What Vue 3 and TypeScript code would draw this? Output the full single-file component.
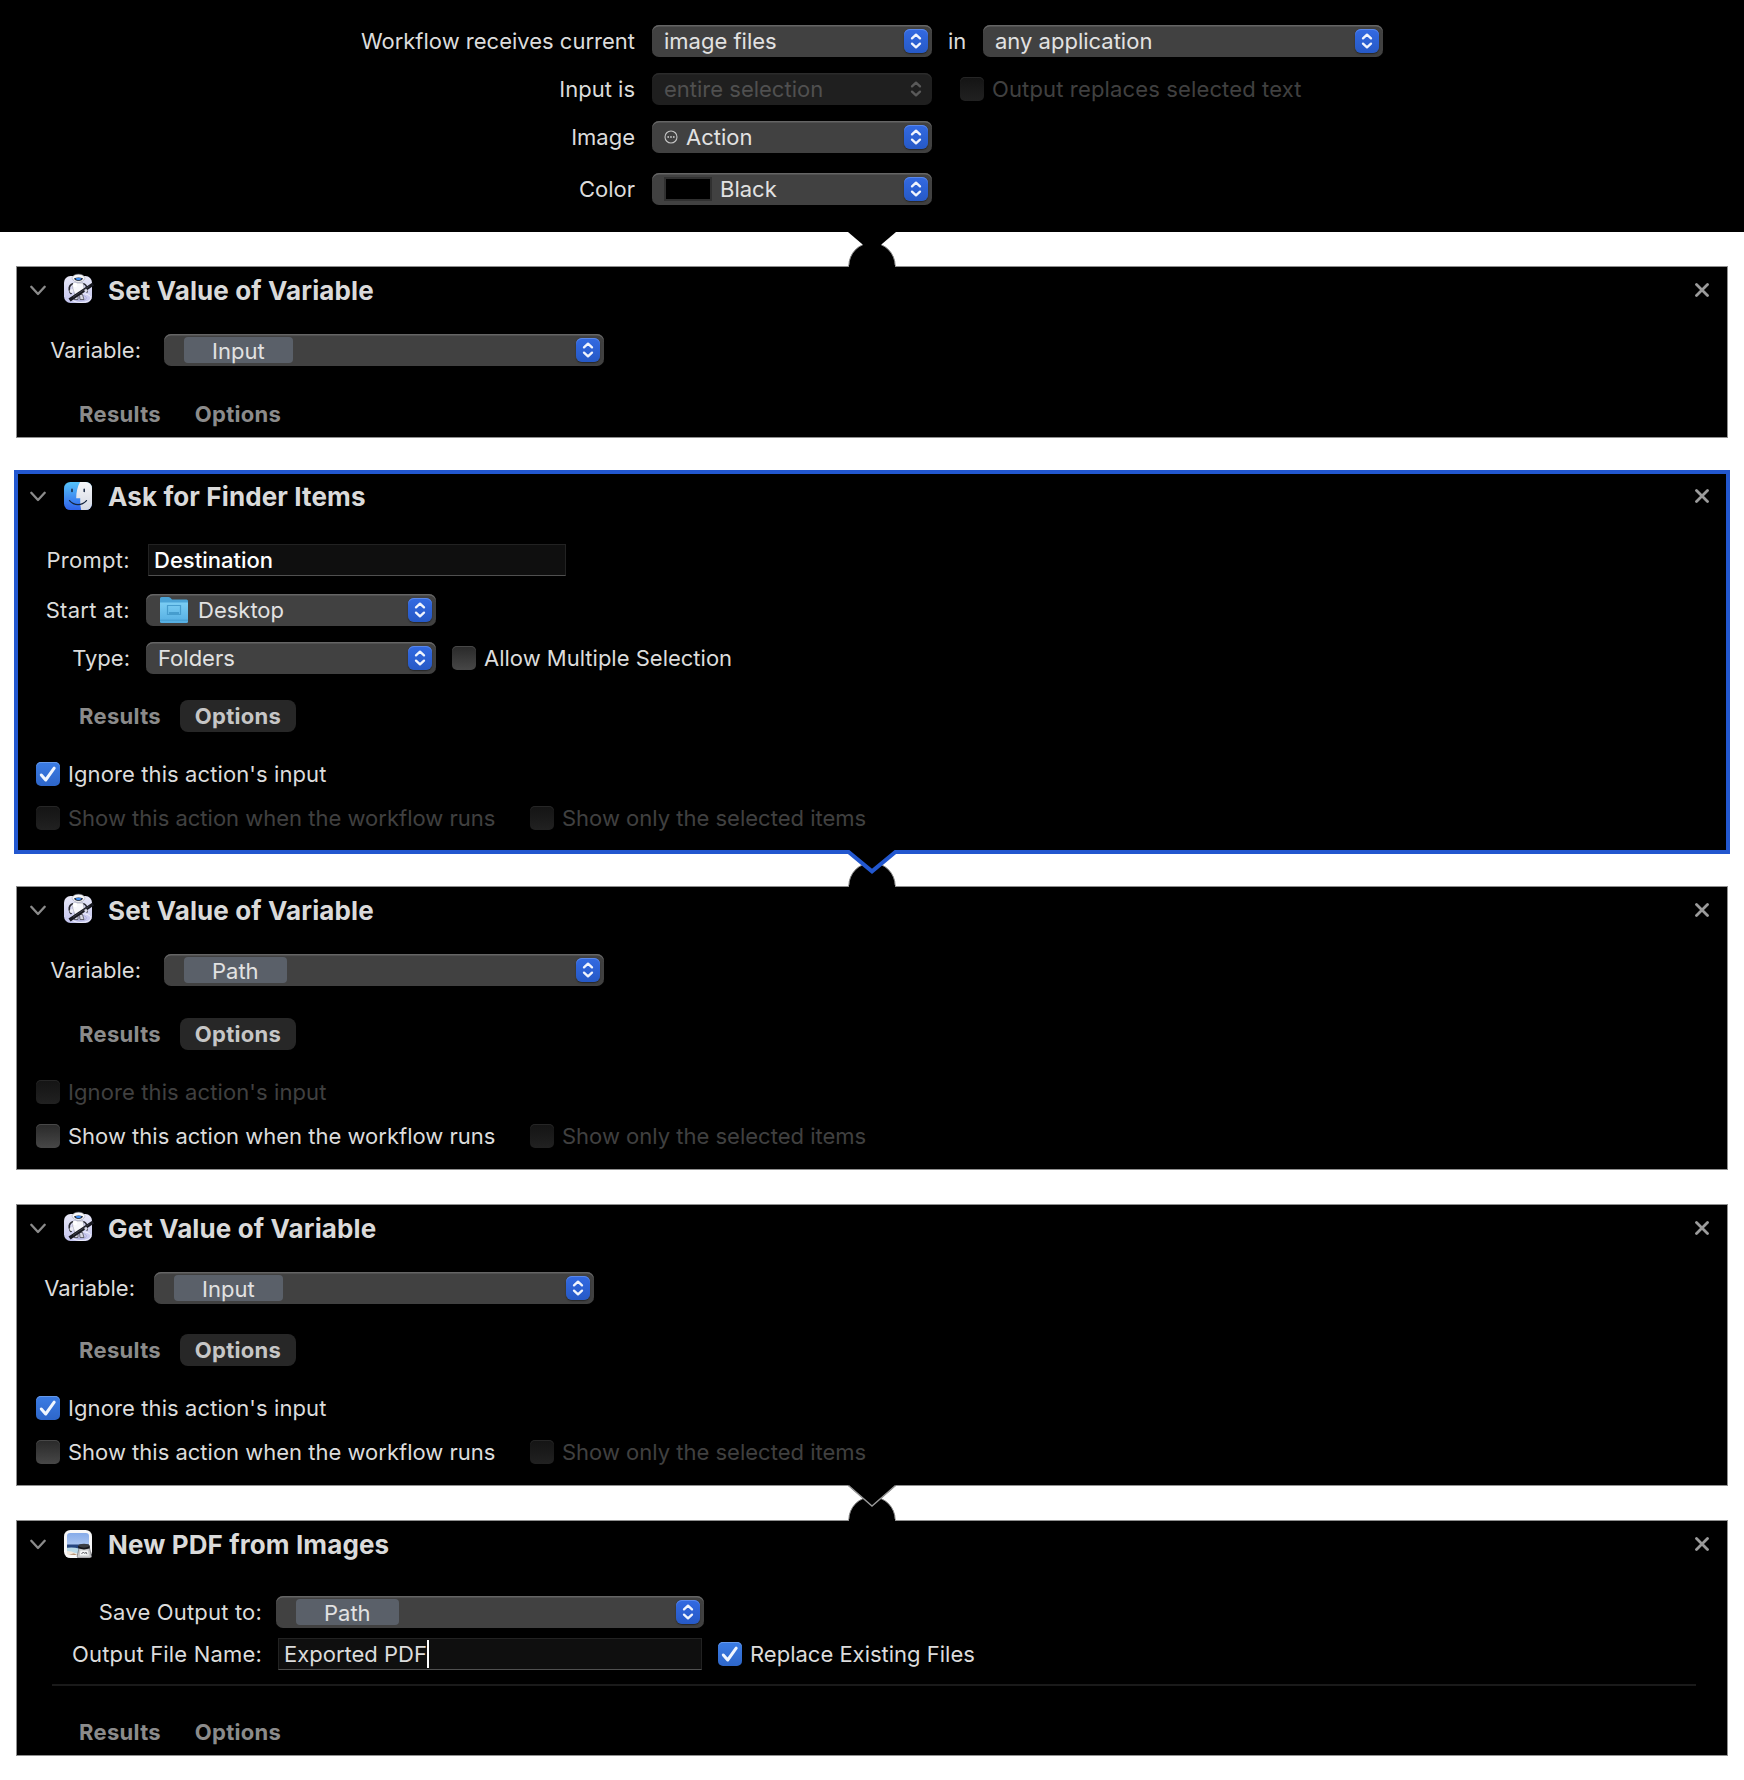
<script setup lang="ts">
type Check = { label: string; checked?: boolean; disabled?: boolean }
type Row = {
  label: string
  kind: 'variable' | 'select' | 'field'
  value: string
  folder?: boolean
  strong?: boolean
  caret?: boolean
  check?: Check
}
type Action = {
  title: string
  icon: 'automator' | 'finder' | 'preview'
  layout: string
  selected?: boolean
  rows: Row[]
  rule?: boolean
  optionsOpen?: boolean
  ignore?: Check
  show?: Check
  link: 'none' | 'plain' | 'selected'
}

const ignore = 'Ignore this action\'s input'
const show = 'Show this action when the workflow runs'
const only: Check = { label: 'Show only the selected items', disabled: true }

const actions: Action[] = [
  {
    title: 'Set Value of Variable', icon: 'automator', layout: 'set', link: 'none',
    rows: [{ label: 'Variable:', kind: 'variable', value: 'Input' }],
  },
  {
    title: 'Ask for Finder Items', icon: 'finder', layout: 'ask', selected: true, link: 'selected',
    rows: [
      { label: 'Prompt:', kind: 'field', value: 'Destination', strong: true },
      { label: 'Start at:', kind: 'select', value: 'Desktop', folder: true },
      { label: 'Type:', kind: 'select', value: 'Folders', check: { label: 'Allow Multiple Selection' } },
    ],
    optionsOpen: true,
    ignore: { label: ignore, checked: true },
    show: { label: show, disabled: true },
  },
  {
    title: 'Set Value of Variable', icon: 'automator', layout: 'set', link: 'none',
    rows: [{ label: 'Variable:', kind: 'variable', value: 'Path' }],
    optionsOpen: true,
    ignore: { label: ignore, disabled: true },
    show: { label: show },
  },
  {
    title: 'Get Value of Variable', icon: 'automator', layout: 'get', link: 'plain',
    rows: [{ label: 'Variable:', kind: 'variable', value: 'Input' }],
    optionsOpen: true,
    ignore: { label: ignore, checked: true },
    show: { label: show },
  },
  {
    title: 'New PDF from Images', icon: 'preview', layout: 'pdf', link: 'none', rule: true,
    rows: [
      { label: 'Save Output to:', kind: 'variable', value: 'Path' },
      { label: 'Output File Name:', kind: 'field', value: 'Exported PDF', caret: true, check: { label: 'Replace Existing Files', checked: true } },
    ],
  },
]
</script>

<template>
  <main class="workflow">
    <svg class="defs" width="0" height="0" aria-hidden="true">
      <defs>
        <linearGradient id="finderBlue" x1="0" y1="0" x2="0" y2="1"><stop offset="0" stop-color="#55c3fa" /><stop offset="1" stop-color="#2f62ea" /></linearGradient>
        <linearGradient id="finderWhite" x1="0" y1="0" x2="0" y2="1"><stop offset="0" stop-color="#f6f6f8" /><stop offset="1" stop-color="#d4d9e4" /></linearGradient>
        <linearGradient id="robotBg" x1="0" y1="0" x2="0" y2="1"><stop offset="0" stop-color="#e9e9f8" /><stop offset="1" stop-color="#c3c4ee" /></linearGradient>
        <linearGradient id="folderBlue" x1="0" y1="0" x2="0" y2="1"><stop offset="0" stop-color="#7bcdf3" /><stop offset="1" stop-color="#54aee2" /></linearGradient>
        <linearGradient id="sky" x1="0" y1="0" x2="0" y2="1"><stop offset="0" stop-color="#86abe9" /><stop offset="1" stop-color="#adc7f2" /></linearGradient>
      </defs>
      <symbol id="updown" viewBox="0 0 24 24">
        <path d="M8 9.4 12 5.6l4 3.8M8 14.6l4 3.8 4-3.8" fill="none" stroke="currentColor" stroke-width="2.3" stroke-linecap="round" stroke-linejoin="round" />
      </symbol>
      <symbol id="automator" viewBox="0 0 32 32">
        <rect x="2" y="3" width="28" height="27" rx="6.5" fill="url(#robotBg)" />
        <ellipse cx="19" cy="25" rx="10" ry="4.5" fill="none" stroke="#f1f1fd" stroke-width="1" />
        <ellipse cx="18" cy="25" rx="6.5" ry="2.8" fill="none" stroke="#a9aad8" stroke-width=".8" />
        <path d="M11.500 10.500c-3.200 1-4.500 3.500-4.200 6 .3 2 1 3.400 2.200 4.400M20.500 10.500c3 .5 4.500 3 4.500 6v3" fill="none" stroke="#2a2b33" stroke-width="1.700" />
        <path d="M11.500 10h9.500l1.200 6-1.800 5.500h-7.600L10.700 15z" fill="#f7f7fb" stroke="#8c8d9b" stroke-width=".5" />
        <path d="M13 21.500h3v5h-4zM17.500 21.500h3l1.500 5h-4z" fill="#d9d9e4" stroke="#4b4c56" stroke-width=".8" />
        <circle cx="13" cy="12" r="2.300" fill="#fff" /><circle cx="9.500" cy="18" r="2" fill="#ececf4" />
        <path d="M10.500 4.200C11.500 2 13.500 1.200 16.500 1.200s5 .8 6 3c.8.200 1 1.200 0 1.600-.8 2.300-3.200 3.500-6 3.500s-5.200-1.200-6-3.500c-1-.4-.8-1.400 0-1.600z" fill="#f8f8fa" stroke="#8e909b" stroke-width=".5" />
        <path d="M12 5.200q4.500-1.300 9 0-.8 2.700-4.500 2.700T12 5.200z" fill="#252a3a" />
        <path d="M13.500 5.300q3-.9 6 0-.7 2-3 2t-3-2z" fill="#3f8ef0" />
        <path d="M6.500 25.600 8.600 28.400 32 12.600 30.200 9.800z" fill="#17181f" />
        <path d="M11 24.200 27.500 13" stroke="#50525d" stroke-width=".7" />
        <circle cx="24" cy="17.500" r="1.600" fill="#dcdce8" />
      </symbol>
      <symbol id="finder" viewBox="0 0 28 28">
        <clipPath id="finderClip"><rect width="28" height="28" rx="6.300" /></clipPath>
        <g clip-path="url(#finderClip)">
          <rect width="28" height="28" fill="url(#finderBlue)" />
          <path d="M16 0h12v28H17.200c-.6-2.800-1-6-1-9.500v-2.300h-4C12.200 10.400 13.600 4.200 16 0z" fill="url(#finderWhite)" />
          <path d="M8 7.200v2.400M20.200 7.200v2.400" stroke="#15253f" stroke-width="1.500" stroke-linecap="round" />
          <path d="M5.500 18.600c4.800 5.400 12.200 5.400 17 0" fill="none" stroke="#15253f" stroke-width="1.300" stroke-linecap="round" />
        </g>
      </symbol>
      <symbol id="preview" viewBox="0 0 28 28">
        <rect width="28" height="28" rx="6.300" fill="#f7f7f8" />
        <rect x="3" y="3" width="22" height="13" rx="3" fill="url(#sky)" />
        <path d="M3 14.500h22v5H3z" fill="#25457f" />
        <path d="M3 17.800q6-1 12 .7l9 .5v4.500H3z" fill="#b9d9e8" />
        <path d="M3 21q5 .2 8 2l4 2H6q-3 0-3-2z" fill="#efe7db" />
        <path d="M5 24.500l5-.9 3 1.300z" fill="#a9805f" />
        <path d="M15 18h10.500l2 8.200q0 1.800-2 1.800H15q-2 0-1.800-1.800z" fill="#c9cacc" stroke="#6b6c70" stroke-width=".7" />
        <path d="M16.300 20.500h7.500l1 5h-9z" fill="#f4f5f6" />
        <path d="M17.500 24l1.800-2 1.500 1.500 1.200-1.300 1 2" fill="none" stroke="#3a3c42" stroke-width=".8" />
        <ellipse cx="20" cy="16" rx="5.800" ry="2.300" fill="#3b3d42" />
        <path d="M14.200 16v2.300q5.800 2.200 11.600 0V16q-5.800 3.300-11.600 0z" fill="#141519" />
      </symbol>
    </svg>

    <header class="setup">
      <div class="setup-row">
        <span class="setup-label">Workflow receives current</span>
        <div class="select w280"><span class="value">image files</span><svg class="stepper"><use href="#updown" /></svg></div>
        <span class="in">in</span>
        <div class="select w400"><span class="value">any application</span><svg class="stepper"><use href="#updown" /></svg></div>
      </div>
      <div class="setup-row">
        <span class="setup-label">Input is</span>
        <div class="select w280 disabled"><span class="value">entire selection</span><svg class="stepper"><use href="#updown" /></svg></div>
        <label class="check disabled replaces"><i class="box"></i><span>Output replaces selected text</span></label>
      </div>
      <div class="setup-row">
        <span class="setup-label">Image</span>
        <div class="select w280">
          <svg class="action-glyph" viewBox="0 0 14 14"><circle cx="7" cy="7" r="6" fill="none" stroke="#c4c4c4" stroke-width="1.100" /><g fill="#c4c4c4"><circle cx="4.200" cy="7" r=".9" /><circle cx="7" cy="7" r=".9" /><circle cx="9.800" cy="7" r=".9" /></g></svg>
          <span>Action</span><svg class="stepper"><use href="#updown" /></svg>
        </div>
      </div>
      <div class="setup-row color">
        <span class="setup-label">Color</span>
        <div class="select w280"><i class="swatch"></i><span>Black</span><svg class="stepper"><use href="#updown" /></svg></div>
      </div>
    </header>
    <div class="gap">
      <svg class="link" viewBox="0 0 52 40"><path d="M2.800 36a23.200 23.200 0 0 1 46.400 0" fill="#000" stroke="#8c8c8c" stroke-width="1" /><path d="M3 35h46v4H3z" /><path d="M2 0h48v2L26 22.500 2 2z" fill="#000" /></svg>
    </div>

    <template v-for="(a, i) in actions" :key="i">
      <section class="card" :class="[a.layout, { selected: a.selected }]">
        <div class="head">
          <svg class="chevron" viewBox="0 0 16 12"><path d="M1.300 1.800 8 9l6.700-7.200" fill="none" stroke="#8b8b8b" stroke-width="2.300" stroke-linecap="round" stroke-linejoin="round" /></svg>
          <svg class="app" :class="a.icon"><use :href="'#' + a.icon" /></svg>
          <h2>{{ a.title }}</h2>
          <svg class="close" viewBox="0 0 14 14"><path d="m1.500 1.500 11 11m0-11-11 11" stroke="#9b9b9b" stroke-width="2.800" stroke-linecap="round" /></svg>
        </div>
        <div class="rows">
          <div v-for="r in a.rows" :key="r.label" class="row">
            <span class="label">{{ r.label }}</span>
            <div v-if="r.kind === 'field'" class="field" :class="{ strong: r.strong }"><span>{{ r.value }}</span><i v-if="r.caret" class="caret"></i></div>
            <div v-else class="select" :class="r.kind">
              <svg v-if="r.folder" class="folder" viewBox="0 0 28 26">
                <path d="M0 1.500Q0 0 1.500 0h7q1 0 1.800.8L12 2.500h14.500Q28 2.500 28 4v6H0z" fill="#4ba3d6" />
                <path d="M0 5.500h28v19q0 1.500-1.500 1.500h-25Q0 26 0 24.500z" fill="url(#folderBlue)" />
                <path d="M0 23.200h28" stroke="#3f95c9" stroke-width=".8" />
                <path d="M7.500 8.500h13v9h-13z" fill="none" stroke="#469dce" stroke-width="1.200" /><path d="M9 15h10v2H9z" fill="#469dce" />
              </svg>
              <span :class="{ chip: r.kind === 'variable' }">{{ r.value }}</span>
              <svg class="stepper"><use href="#updown" /></svg>
            </div>
            <label v-if="r.check" class="check"><i class="box" :class="{ on: r.check.checked }"><svg v-if="r.check.checked" viewBox="0 0 24 24"><path d="m5.300 13 4.400 5L18.200 6.200" /></svg></i><span>{{ r.check.label }}</span></label>
          </div>
        </div>
        <hr v-if="a.rule">
        <div class="tabs">
          <span class="tab results">Results</span>
          <span class="tab" :class="{ active: a.optionsOpen }">Options</span>
        </div>
        <div v-if="a.ignore && a.show" class="options">
          <label class="check ignore" :class="{ disabled: a.ignore.disabled }"><i class="box" :class="{ on: a.ignore.checked }"><svg v-if="a.ignore.checked" viewBox="0 0 24 24"><path d="m5.300 13 4.400 5L18.200 6.200" /></svg></i><span>{{ a.ignore.label }}</span></label>
          <div class="pair">
            <label class="check first" :class="{ disabled: a.show.disabled }"><i class="box"></i><span>{{ a.show.label }}</span></label>
            <label class="check disabled"><i class="box"></i><span>{{ only.label }}</span></label>
          </div>
        </div>
      </section>
      <div v-if="i < actions.length - 1" class="gap">
        <svg v-if="a.link !== 'none'" class="link" viewBox="0 0 52 40">
          <path d="M2.800 36a23.200 23.200 0 0 1 46.400 0" fill="#000" stroke="#8c8c8c" stroke-width="1" /><path d="M3 35h46v4H3z" />
          <template v-if="a.link === 'selected'">
            <path d="M2 0h48v2L26 21.500 2 2z" fill="#000" />
            <path d="M0 2h2.600L26 21.400 49.400 2H52" fill="none" stroke="#2257cf" stroke-width="4" />
          </template>
          <template v-else>
            <path d="M2.500 0h47v2L26 22.300 2.500 2z" fill="#000" />
            <path d="M2.500 1.500 26 22 49.500 1.500" fill="none" stroke="#999" stroke-width="1.400" />
          </template>
        </svg>
      </div>
    </template>
  </main>
</template>

<style>
body { margin: 0; background: #fff; }
</style>

<style scoped>
.workflow { width: 1744px; height: 1780px; background: #fff; color: #dcdcdc; font: 430 22px/32px Inter, "Liberation Sans", sans-serif; letter-spacing: 0; overflow: hidden; white-space: nowrap; }
.defs { position: absolute; }
.setup { box-sizing: border-box; height: 232px; padding-top: 25px; background: #000; display: flex; flex-direction: column; gap: 16px; }
.setup-row { display: flex; align-items: center; height: 32px; }
.setup-row.color { margin-top: 4px; }
.setup-label { width: 635px; margin-right: 17px; text-align: right; }
.in { width: 35px; margin-left: 16px; }
.replaces { margin-left: 28px; letter-spacing: .14px; }

.select { box-sizing: border-box; display: flex; align-items: center; height: 32px; padding: 0 4px 0 12px; border-radius: 7px; background: #414141; box-shadow: inset 0 1.5px 0 #656565; color: #e2e2e2; }
.select.disabled { background: #1f1f1f; box-shadow: inset 0 1.5px 0 #2b2b2b; color: #505050; }
.w280 { width: 280px; }
.w400 { width: 400px; }
.stepper { width: 24px; height: 24px; margin-left: auto; flex: none; border-radius: 6px; background: linear-gradient(#336ae2, #2659c6); box-shadow: 0 1px 1.5px rgba(0, 0, 0, .45), inset 0 1px 0 #5a88ec; color: #f0f4fd; }
.disabled .stepper { background: none; box-shadow: none; color: #5a5a5a; }
.action-glyph { width: 14px; height: 14px; margin-right: 8px; }
.swatch { box-sizing: border-box; width: 48px; height: 24px; margin-right: 8px; border: 2px solid #303030; background: #000; }

.gap { position: relative; height: 34px; }
.link { position: absolute; left: 846px; top: -2px; width: 52px; height: 40px; z-index: 1; }

.card { box-sizing: border-box; margin: 0 16px; padding-top: 10px; background: #000; box-shadow: inset 0 0 0 1px #8f8f8f; }
.card.selected { box-shadow: inset 0 0 0 2px #2257cf, 0 0 0 2px #2257cf; }
.head { display: flex; align-items: center; height: 28px; padding: 0 19px 0 14px; }
.chevron { width: 16px; height: 12px; margin-top: 2px; }
.app { width: 28px; height: 28px; margin: 0 16px 0 18px; }
.app.automator { width: 32px; height: 32px; margin: -3px 14px 0 16px; }
h2 { margin: 0; padding-top: 2px; font-size: 26px; font-weight: 700; letter-spacing: .12px; color: #dadada; }
.close { width: 14px; height: 14px; margin-left: auto; }

.rows { display: flex; flex-direction: column; padding-top: 30px; gap: 16px; }
.row { display: flex; align-items: center; height: 32px; }
.label { width: 125px; margin-right: 23px; text-align: right; }
.select.variable { width: 440px; padding-left: 20px; }
.chip { box-sizing: border-box; height: 26px; line-height: 26px; padding: 1px 28px 0 28px; border-radius: 4px; background: #5a6069; }
.folder { width: 28px; height: 26px; margin-right: 10px; }
.field { box-sizing: border-box; display: flex; align-items: center; height: 32px; padding-left: 6px; margin-left: 2px; background: #0f0f0f; border: 1px solid #222; border-bottom-color: #505050; }
.field.strong { color: #fff; font-weight: 500; }
.field span { margin-left: -1px; }
.caret { width: 2px; height: 28px; background: #fff; }

.ask .rows { padding-top: 34px; }
.ask .row:first-child { margin-bottom: 2px; }
.ask .label { width: 114px; margin-right: 16px; letter-spacing: .3px; }
.ask .row:last-child .label { letter-spacing: 0; }
.ask .select { width: 290px; }
.ask .select:has(.folder) { padding-left: 14px; }
.ask .field { width: 418px; }
.get .label { width: 119px; margin-right: 19px; }
.pdf .rows { padding-top: 38px; gap: 10px; }
.pdf .label { width: 246px; margin-right: 14px; letter-spacing: .18px; }
.pdf .select.variable { width: 428px; }
.pdf .field { width: 424px; }
.row .check { margin-left: 16px; }
hr { margin: 14px 32px 0 36px; height: 2px; border: 0; background: #1a1a1a; }

.tabs { display: flex; gap: 7px; padding: 32px 0 8px 51px; }
.get .tabs, .pdf .tabs { padding-top: 30px; }
.ask .tabs { padding-top: 26px; }
.tab { width: 116px; height: 32px; text-align: center; border-radius: 8px; font-weight: 700; letter-spacing: .3px; color: #8b8b8b; }
.results { width: 106px; }
.tab.active { background: #272727; color: #c6c6c6; }

.options { padding: 22px 0 22px 20px; display: flex; flex-direction: column; gap: 20px; }
.pair { display: flex; }
.first { width: 494px; }
.check { display: flex; align-items: center; height: 24px; gap: 8px; }
.check.ignore { letter-spacing: .1px; }
.check.disabled { color: #404040; }
.box { box-sizing: border-box; display: block; flex: none; width: 24px; height: 24px; border-radius: 5px; background: linear-gradient(#292929, #474747); box-shadow: inset 0 1px 0 #484848; }
.disabled .box { background: linear-gradient(#141414, #212121); box-shadow: inset 0 1px 0 #262626; }
.box.on { background: linear-gradient(#3b7ce4, #2e66c9); box-shadow: inset 0 1px 0 #6699ea; }
.box svg { display: block; width: 24px; height: 24px; fill: none; stroke: #f1f6fe; stroke-width: 3; stroke-linecap: round; stroke-linejoin: round; }
</style>
